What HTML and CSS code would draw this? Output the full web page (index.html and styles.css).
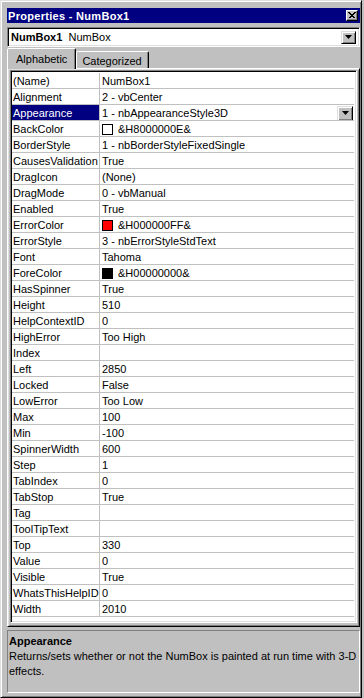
FILE: index.html
```html
<!DOCTYPE html>
<html lang="en">
<head>
    <meta charset="UTF-8">
    <title>Properties - NumBox1</title>
    <link rel="stylesheet" href="styles.css">
</head>
<body>
<div class="window">
    <div class="titlebar">
        <span class="title">Properties - NumBox1</span>
        <span class="close-btn">
            <svg width="8" height="7" viewBox="0 0 8 7"><path d="M0.5 0.5L6.5 6.5M1.5 0.5L7.5 6.5M6.5 0.5L0.5 6.5M7.5 0.5L1.5 6.5" stroke="#000" stroke-width="1" shape-rendering="crispEdges"/></svg>
        </span>
    </div>

    <div class="combo">
        <span class="combo-text"><b>NumBox1</b>&nbsp; NumBox</span>
        <span class="drop-btn">
            <svg width="7" height="4" viewBox="0 0 7 4"><path d="M0 0H7L3.5 4Z" fill="#000"/></svg>
        </span>
    </div>

    <div class="tabs">
        <div class="tab active">Alphabetic</div>
        <div class="tab">Categorized</div>
    </div>

    <div class="tab-panel">
        <div class="grid">
            <div class="row"><div class="name">(Name)</div><div class="value">NumBox1</div></div>
            <div class="row"><div class="name">Alignment</div><div class="value">2 - vbCenter</div></div>
            <div class="row"><div class="name selected">Appearance</div><div class="value">1 - nbAppearanceStyle3D
                <span class="drop-btn small"><svg width="7" height="4" viewBox="0 0 7 4"><path d="M0 0H7L3.5 4Z" fill="#000"/></svg></span></div></div>
            <div class="row"><div class="name">BackColor</div><div class="value"><span class="swatch white"></span>&amp;H8000000E&amp;</div></div>
            <div class="row"><div class="name">BorderStyle</div><div class="value">1 - nbBorderStyleFixedSingle</div></div>
            <div class="row"><div class="name">CausesValidation</div><div class="value">True</div></div>
            <div class="row"><div class="name">DragIcon</div><div class="value">(None)</div></div>
            <div class="row"><div class="name">DragMode</div><div class="value">0 - vbManual</div></div>
            <div class="row"><div class="name">Enabled</div><div class="value">True</div></div>
            <div class="row"><div class="name">ErrorColor</div><div class="value"><span class="swatch red"></span>&amp;H000000FF&amp;</div></div>
            <div class="row"><div class="name">ErrorStyle</div><div class="value">3 - nbErrorStyleStdText</div></div>
            <div class="row"><div class="name">Font</div><div class="value">Tahoma</div></div>
            <div class="row"><div class="name">ForeColor</div><div class="value"><span class="swatch black"></span>&amp;H00000000&amp;</div></div>
            <div class="row"><div class="name">HasSpinner</div><div class="value">True</div></div>
            <div class="row"><div class="name">Height</div><div class="value">510</div></div>
            <div class="row"><div class="name">HelpContextID</div><div class="value">0</div></div>
            <div class="row"><div class="name">HighError</div><div class="value">Too High</div></div>
            <div class="row"><div class="name">Index</div><div class="value"></div></div>
            <div class="row"><div class="name">Left</div><div class="value">2850</div></div>
            <div class="row"><div class="name">Locked</div><div class="value">False</div></div>
            <div class="row"><div class="name">LowError</div><div class="value">Too Low</div></div>
            <div class="row"><div class="name">Max</div><div class="value">100</div></div>
            <div class="row"><div class="name">Min</div><div class="value">-100</div></div>
            <div class="row"><div class="name">SpinnerWidth</div><div class="value">600</div></div>
            <div class="row"><div class="name">Step</div><div class="value">1</div></div>
            <div class="row"><div class="name">TabIndex</div><div class="value">0</div></div>
            <div class="row"><div class="name">TabStop</div><div class="value">True</div></div>
            <div class="row"><div class="name">Tag</div><div class="value"></div></div>
            <div class="row"><div class="name">ToolTipText</div><div class="value"></div></div>
            <div class="row"><div class="name">Top</div><div class="value">330</div></div>
            <div class="row"><div class="name">Value</div><div class="value">0</div></div>
            <div class="row"><div class="name">Visible</div><div class="value">True</div></div>
            <div class="row"><div class="name">WhatsThisHelpID</div><div class="value">0</div></div>
            <div class="row"><div class="name">Width</div><div class="value">2010</div></div>
        </div>
    </div>

    <div class="desc">
        <div class="desc-title">Appearance</div>
        <div class="desc-text">Returns/sets whether or not the NumBox is painted at run time with 3-D effects.</div>
    </div>
</div>
</body>
</html>
```

FILE: styles.css
```css
body {
    margin: 0;
    padding: 0;
    background-color: #c0c0c0;
    font-family: "Liberation Sans", Arial, sans-serif;
    font-size: 11px;
    color: #000;
}
.window {
    width: 362px;
    height: 698px;
    box-sizing: border-box;
    border: 1px solid;
    border-color: #dfdfdf #000 #000 #dfdfdf;
    box-shadow: inset 1px 1px #fff, inset -1px -1px #808080;
    padding: 7px 1px 4px 6px;
    display: flex;
    flex-direction: column;
}
.titlebar {
    height: 15px;
    background-color: #000080;
    color: #fff;
    display: flex;
    align-items: center;
    justify-content: space-between;
    padding-left: 1px;
}
.title {
    font-weight: bold;
    letter-spacing: 0.3px;
}
.close-btn {
    width: 12px;
    height: 11px;
    box-sizing: border-box;
    margin-right: 2px;
    background-color: #c0c0c0;
    border: 1px solid;
    border-color: #fff #000 #000 #fff;
    box-shadow: inset -1px -1px #808080;
    display: flex;
    align-items: center;
    justify-content: center;
    padding: 0 1px 1px 0;
}
.close-btn svg {
    display: block;
}
.combo {
    margin-top: 4px;
    height: 20px;
    box-sizing: border-box;
    background-color: #fff;
    border: 1px solid;
    border-color: #808080 #fff #fff #808080;
    box-shadow: inset 1px 1px #000, inset -1px -1px #dfdfdf;
    display: flex;
    align-items: center;
    justify-content: space-between;
    padding-left: 3px;
}
.drop-btn {
    width: 15px;
    height: 13px;
    box-sizing: border-box;
    margin-right: 3px;
    background-color: #c0c0c0;
    border: 1px solid;
    border-color: #dfdfdf #000 #000 #dfdfdf;
    box-shadow: inset 1px 1px #fff, inset -1px -1px #808080;
    display: flex;
    align-items: center;
    justify-content: center;
}
.drop-btn svg {
    display: block;
}
.drop-btn.small {
    width: 16px;
    height: 15px;
    margin-right: 1px;
    margin-left: auto;
}
.tabs {
    margin-top: 1px;
    height: 20px;
    display: flex;
    align-items: flex-end;
    position: relative;
    z-index: 1;
}
.tab {
    height: 17px;
    box-sizing: border-box;
    border: 1px solid;
    border-bottom: none;
    border-color: #fff #000 transparent #fff;
    box-shadow: inset -1px 0 #808080;
    border-radius: 2px 2px 0 0;
    padding: 3px 6px 0 5px;
    background-color: #c0c0c0;
    line-height: 13px;
}
.tab.active {
    height: 21px;
    margin-bottom: -1px;
    padding: 4px 8px 0 8px;
}
.tab-panel {
    height: 559px;
    box-sizing: border-box;
    border: 1px solid;
    border-color: #fff #000 #000 #fff;
    box-shadow: inset 1px 1px #dfdfdf, inset -1px -1px #808080;
    padding: 1px 2px 2px 2px;
}
.grid {
    height: 553px;
    box-sizing: border-box;
    background-color: #fff;
    border: 1px solid;
    border-color: #808080 #fff #fff #808080;
    box-shadow: inset 1px 1px #000, inset -1px -1px #dfdfdf;
    padding: 2px 2px 0 1px;
}
.row {
    display: grid;
    grid-template-columns: 88px 1fr;
    height: 16px;
}
.row .name,
.row .value {
    box-sizing: border-box;
    height: 16px;
    border-bottom: 1px solid #c0c0c0;
    padding-top: 1px;
    line-height: 15px;
    white-space: nowrap;
    overflow: hidden;
}
.row .name {
    border-right: 1px solid #c0c0c0;
    padding-left: 1px;
}
.row .name.selected {
    background-color: #000080;
    color: #fff;
}
.row .value {
    padding-left: 2px;
    display: flex;
    align-items: center;
}
.swatch {
    width: 11px;
    height: 11px;
    box-sizing: border-box;
    border: 1px solid #000;
    margin-right: 5px;
}
.swatch.white {
    background-color: #fff;
}
.swatch.red {
    background-color: #ff0000;
}
.swatch.black {
    background-color: #000;
}
.desc {
    margin-top: 3px;
    height: 63px;
    box-sizing: border-box;
    border: 1px solid;
    border-color: #808080 #fff #fff #808080;
    padding: 3px 2px 0 1px;
    line-height: 15px;
}
.desc-title {
    font-weight: bold;
}
```
